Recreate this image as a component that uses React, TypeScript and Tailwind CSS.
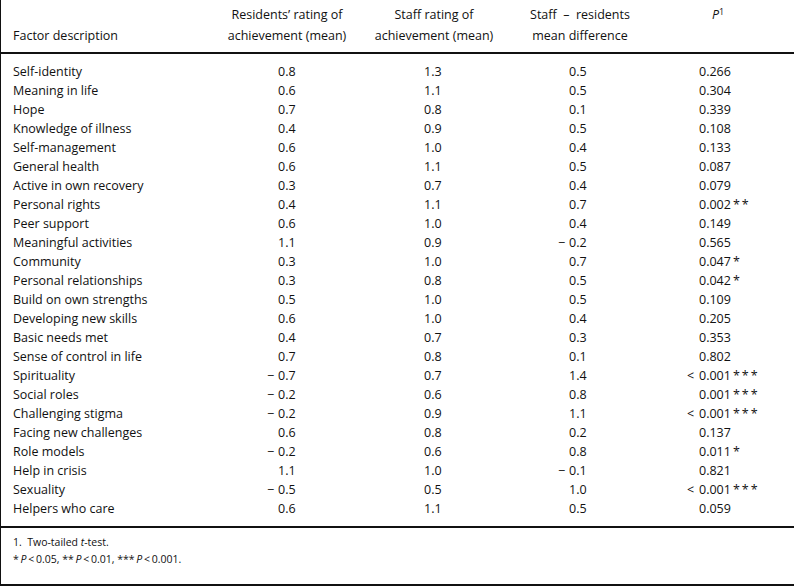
import React from "react";

type Row = [string, string, string, string, string];

const rows: Row[] = [
  ["Self-identity", "0.8", "1.3", "0.5", "0.266"],
  ["Meaning in life", "0.6", "1.1", "0.5", "0.304"],
  ["Hope", "0.7", "0.8", "0.1", "0.339"],
  ["Knowledge of illness", "0.4", "0.9", "0.5", "0.108"],
  ["Self-management", "0.6", "1.0", "0.4", "0.133"],
  ["General health", "0.6", "1.1", "0.5", "0.087"],
  ["Active in own recovery", "0.3", "0.7", "0.4", "0.079"],
  ["Personal rights", "0.4", "1.1", "0.7", "0.002**"],
  ["Peer support", "0.6", "1.0", "0.4", "0.149"],
  ["Meaningful activities", "1.1", "0.9", "-0.2", "0.565"],
  ["Community", "0.3", "1.0", "0.7", "0.047*"],
  ["Personal relationships", "0.3", "0.8", "0.5", "0.042*"],
  ["Build on own strengths", "0.5", "1.0", "0.5", "0.109"],
  ["Developing new skills", "0.6", "1.0", "0.4", "0.205"],
  ["Basic needs met", "0.4", "0.7", "0.3", "0.353"],
  ["Sense of control in life", "0.7", "0.8", "0.1", "0.802"],
  ["Spirituality", "-0.7", "0.7", "1.4", "<0.001***"],
  ["Social roles", "-0.2", "0.6", "0.8", "0.001***"],
  ["Challenging stigma", "-0.2", "0.9", "1.1", "<0.001***"],
  ["Facing new challenges", "0.6", "0.8", "0.2", "0.137"],
  ["Role models", "-0.2", "0.6", "0.8", "0.011*"],
  ["Help in crisis", "1.1", "1.0", "-0.1", "0.821"],
  ["Sexuality", "-0.5", "0.5", "1.0", "<0.001***"],
  ["Helpers who care", "0.6", "1.1", "0.5", "0.059"],
];

// number with a hanging sign slot so the digits line up
const Num = ({ value }: { value: string }) => {
  const neg = value.startsWith("-");
  return (
    <div className="flex">
      <span className="w-[11px]">{neg ? "\u2212" : ""}</span>
      <span>{neg ? value.slice(1) : value}</span>
    </div>
  );
};

const PVal = ({ value }: { value: string }) => {
  const lt = value.startsWith("<");
  const body = lt ? value.slice(1) : value;
  const stars = body.replace(/[^*]/g, "");
  const num = body.replace(/\*/g, "");
  return (
    <div className="flex items-start">
      <span className="w-[12px]">{lt ? "<" : ""}</span>
      <span>{num}</span>
      {stars && <span className="tracking-[2px] ml-[2px]">{stars}</span>}
    </div>
  );
};

export default function App() {
  return (
    <div
      className="w-[794px] h-[586px] bg-white text-[#111] border-l border-b-2 border-[#111] flex flex-col"
      style={{ fontFamily: "'Open Sans', 'Noto Sans', sans-serif" }}
    >
      {/* Header */}
      <div className="grid grid-cols-[214px_144px_150px_142px_134px] text-[12.5px] leading-[21px] pt-[4px] pb-[6px] border-b-2 border-[#111]">
        <div className="pl-[12px] flex items-end">Factor description</div>
        <div className="text-center">
          Residents’ rating of
          <br />
          achievement (mean)
        </div>
        <div className="text-center">
          Staff rating of
          <br />
          achievement (mean)
        </div>
        <div className="text-center">
          Staff &nbsp;–&nbsp; residents
          <br />
          mean difference
        </div>
        <div className="text-center">
          <i>P</i>
          <sup className="text-[9px]">1</sup>
        </div>
      </div>

      {/* Body */}
      <div className="pt-[9px] pb-[7px] border-b-2 border-[#111] text-[12.5px]">
        {rows.map((r) => (
          <div
            key={r[0]}
            className="grid grid-cols-[266px_146px_145px_129px_1fr] h-[19px] items-center"
          >
            <div className="pl-[12px]">{r[0]}</div>
            <Num value={r[1]} />
            <Num value={r[2]} />
            <Num value={r[3]} />
            <PVal value={r[4]} />
          </div>
        ))}
      </div>

      {/* Footnotes */}
      <div className="pl-[12px] pt-[6px] text-[10.5px] leading-[17px]">
        <div>
          1.&nbsp; Two-tailed <i>t</i>-test.
        </div>
        <div>
          *&thinsp;<i>P</i>&thinsp;&lt;&thinsp;0.05, **&thinsp;<i>P</i>&thinsp;&lt;&thinsp;0.01,
          ***&thinsp;<i>P</i>&thinsp;&lt;&thinsp;0.001.
        </div>
      </div>
    </div>
  );
}
